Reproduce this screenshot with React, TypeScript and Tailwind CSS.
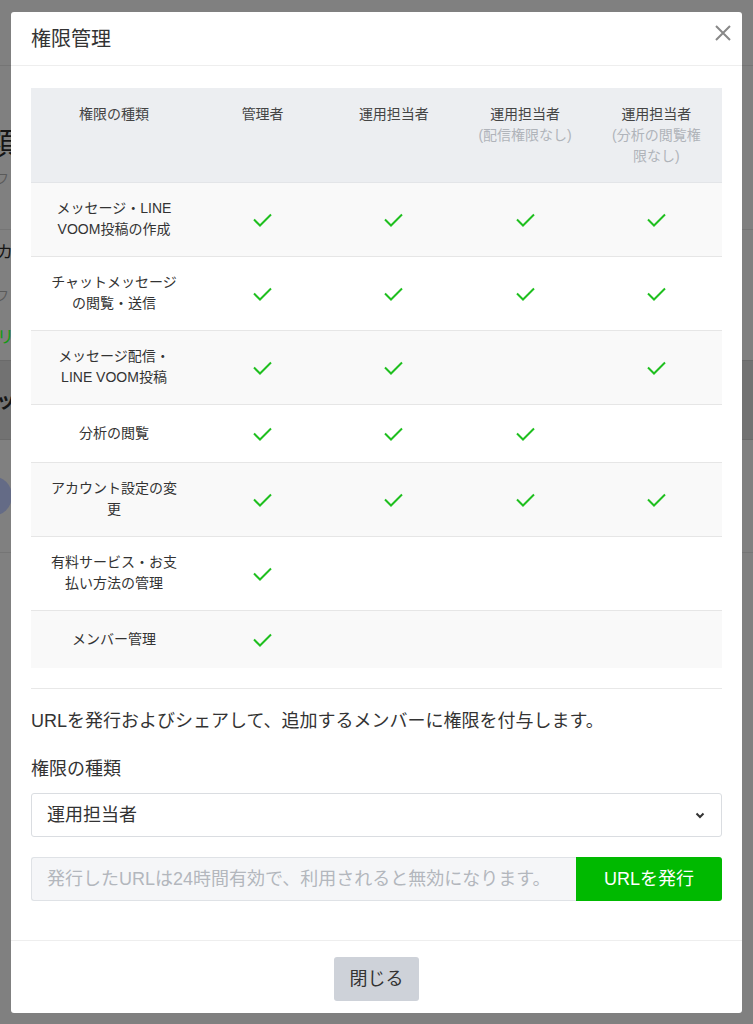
import React from "react";

const rows: { label: string; checks: boolean[] }[] = [
  { label: "メッセージ・LINE VOOM投稿の作成", checks: [true, true, true, true] },
  { label: "チャットメッセージの閲覧・送信", checks: [true, true, true, true] },
  { label: "メッセージ配信・LINE VOOM投稿", checks: [true, true, false, true] },
  { label: "分析の閲覧", checks: [true, true, true, false] },
  { label: "アカウント設定の変更", checks: [true, true, true, true] },
  { label: "有料サービス・お支払い方法の管理", checks: [true, false, false, false] },
  { label: "メンバー管理", checks: [true, false, false, false] },
];

const Check = () => (
  <svg width="19" height="14" viewBox="0 0 19 14" fill="none">
    <path d="M1 6.5L7 12.5L18 1.5" stroke="#1fbf1f" strokeWidth="2" />
  </svg>
);

const Backdrop = () => (
  <div className="flex flex-col text-[#151515]">
    <div className="h-[66px] border-b border-[#757575]" />
    <div className="h-[58px]" />
    <div className="h-[40px] -ml-[14px] text-[30px] leading-[40px]">額</div>
    <div className="h-[30px] -ml-[4px] text-[13px] leading-[30px] text-[#5a5a5a]">フ</div>
    <div className="h-[36px] border-b border-[#757575]" />
    <div className="h-[46px] -ml-[4px] text-[17px] leading-[46px]">カ</div>
    <div className="h-[40px] -ml-[4px] text-[13px] leading-[40px] text-[#5a5a5a]">フ</div>
    <div className="h-[44px] -ml-[3px] text-[17px] leading-[44px] text-[#129a12]">リ</div>
    <div className="h-[80px] bg-[#727272] border-y border-[#6a6a6a] -ml-[4px] text-[20px] font-bold leading-[80px]">ッ</div>
    <div className="h-[113px] border-b border-[#757575] flex items-center">
      <div className="w-[40px] h-[40px] -ml-[28px] rounded-full bg-[#646b86]" />
    </div>
  </div>
);

export default function App() {
  return (
    <div
      className="relative w-full h-[1024px] overflow-hidden bg-[#808080]"
      style={{ fontFamily: '"Liberation Sans", "Noto Sans CJK JP", sans-serif' }}
    >
      <Backdrop />
      <div className="absolute inset-0 flex justify-center pt-[12px]">
        <div className="w-[731px] h-[1001px] bg-white rounded-[3px] flex flex-col text-[#333]">
          {/* header */}
          <div className="relative h-[54px] border-b border-[#eeeeee] px-5 flex items-center">
            <h2 className="text-[20px] leading-[28px]">権限管理</h2>
            <button className="absolute right-[8px] top-[10px] p-[2px]">
              <svg width="18" height="18" viewBox="0 0 18 18" fill="none">
                <path d="M2 2L16 16M16 2L2 16" stroke="#888" strokeWidth="2" />
              </svg>
            </button>
          </div>

          {/* body */}
          <div className="flex-1 px-5 pt-[22px]">
            <div className="text-[14px] leading-[21px]">
              <div className="grid grid-cols-[166px_repeat(4,1fr)] bg-[#eceef1] border-b border-[#e3e5e8] text-[#444]">
                <div className="px-4 pt-4 pb-[15px] text-center">権限の種類</div>
                <div className="px-4 pt-4 pb-[15px] text-center">管理者</div>
                <div className="px-4 pt-4 pb-[15px] text-center">運用担当者</div>
                <div className="px-4 pt-4 pb-[15px] text-center">
                  運用担当者
                  <div className="text-[#b0b4ba]">(配信権限なし)</div>
                </div>
                <div className="px-4 pt-4 pb-[15px] text-center">
                  運用担当者
                  <div className="text-[#b0b4ba]">(分析の閲覧権限なし)</div>
                </div>
              </div>
              {rows.map((row, i) => (
                <div
                  key={row.label}
                  className={
                    "grid grid-cols-[166px_repeat(4,1fr)] items-center " +
                    (i % 2 === 0 ? "bg-[#f9f9f9]" : "bg-white") +
                    (i < rows.length - 1 ? " border-b border-[#e6e6e6]" : "")
                  }
                >
                  <div className="px-4 pt-[15px] pb-[16px] text-center min-h-[57px] flex items-center justify-center">
                    {row.label}
                  </div>
                  {row.checks.map((c, j) => (
                    <div key={j} className="h-[26px] flex items-center justify-center">
                      {c && <Check />}
                    </div>
                  ))}
                </div>
              ))}
            </div>

            <div className="mt-[20px] border-t border-[#e8e8e8]" />

            <p className="mt-[20px] text-[18px] leading-[24px]">
              URLを発行およびシェアして、追加するメンバーに権限を付与します。
            </p>
            <p className="mt-[24px] text-[18px] leading-[24px]">権限の種類</p>

            <div className="mt-[12px] h-[44px] border border-[#dadde1] rounded-[3px] flex items-center justify-between pl-[15px] pr-[16px] text-[18px]">
              <span>運用担当者</span>
              <svg width="10" height="7" viewBox="0 0 10 7" fill="none">
                <path d="M1.5 1.5L5 5L8.5 1.5" stroke="#333" strokeWidth="2" />
              </svg>
            </div>

            <div className="mt-[20px] h-[44px] flex">
              <div className="flex-1 bg-[#f5f6f8] border border-[#dfe2e6] border-r-0 rounded-l-[3px] flex items-center pl-[15px] text-[18px] text-[#b3b7bd]">
                発行したURLは24時間有効で、利用されると無効になります。
              </div>
              <button className="w-[146px] bg-[#00b900] rounded-r-[3px] text-white text-[18px]">
                URLを発行
              </button>
            </div>
          </div>

          {/* footer */}
          <div className="border-t border-[#eeeeee] pt-4 pb-3 flex justify-center">
            <button className="w-[85px] h-[44px] bg-[#ced2d9] rounded-[3px] text-[18px] text-[#333]">
              閉じる
            </button>
          </div>
        </div>
      </div>
    </div>
  );
}
